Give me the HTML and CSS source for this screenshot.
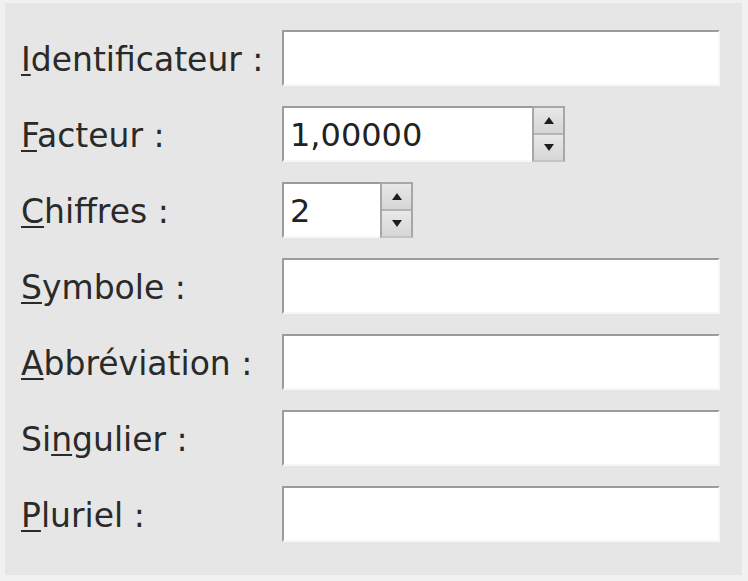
FILE: index.html
```html
<!DOCTYPE html>
<html lang="fr">
<head>
<meta charset="utf-8">
<title>Unité</title>
<link rel="stylesheet" href="styles.css">
</head>
<body>
<div class="panel">
  <form class="form">
    <label class="label" for="ident"><span class="mn">I</span>dentificateur :</label>
    <input class="entry" id="ident" type="text" value="">

    <label class="label" for="facteur"><span class="mn">F</span>acteur :</label>
    <div class="spin spin-wide">
      <input class="spin-field" id="facteur" type="text" value="1,00000">
      <div class="spin-buttons">
        <span class="spin-btn"><span class="arrow-up"></span></span>
        <span class="spin-btn"><span class="arrow-down"></span></span>
      </div>
    </div>

    <label class="label" for="chiffres"><span class="mn">C</span>hiffres :</label>
    <div class="spin spin-narrow">
      <input class="spin-field" id="chiffres" type="text" value="2">
      <div class="spin-buttons">
        <span class="spin-btn"><span class="arrow-up"></span></span>
        <span class="spin-btn"><span class="arrow-down"></span></span>
      </div>
    </div>

    <label class="label" for="symbole"><span class="mn">S</span>ymbole :</label>
    <input class="entry" id="symbole" type="text" value="">

    <label class="label" for="abbr"><span class="mn">A</span>bbréviation :</label>
    <input class="entry" id="abbr" type="text" value="">

    <label class="label" for="sing">Si<span class="mn">n</span>gulier :</label>
    <input class="entry" id="sing" type="text" value="">

    <label class="label" for="plur"><span class="mn">P</span>luriel :</label>
    <input class="entry" id="plur" type="text" value="">
  </form>
</div>
</body>
</html>
```
FILE: styles.css
```css
html, body {
  margin: 0;
  padding: 0;
}

body {
  background: #f1f1f1;
  width: 748px;
  height: 581px;
  overflow: hidden;
  font-family: "DejaVu Sans", "Noto Sans", sans-serif;
  color: #2a2a2a;
}

.panel {
  margin: 3px 6px 0 5px;
  height: 572px;
  box-sizing: border-box;
  background: #e6e6e6;
  padding: 27px 22px 0 16px;
}

.form {
  display: grid;
  grid-template-columns: 261px 1fr;
  grid-auto-rows: 56px;
  row-gap: 20px;
  align-items: center;
}

.label {
  font-size: 33px;
  line-height: 1;
  white-space: nowrap;
  padding-top: 2px;
}

.mn {
  text-decoration: underline;
  text-decoration-thickness: 2px;
  text-underline-offset: 3px;
}

.entry,
.spin-field {
  font-family: "DejaVu Sans", "Noto Sans", sans-serif;
  font-size: 32px;
  color: #222;
  background: #ffffff;
  box-sizing: border-box;
  height: 56px;
  margin: 0;
  padding: 2px 6px 0;
  border-style: solid;
  border-width: 2px;
  border-color: #9b9b9b #f7f7f7 #f7f7f7 #9b9b9b;
  outline: none;
}

.entry {
  width: 100%;
}

.spin {
  display: flex;
  height: 56px;
}

.spin-wide {
  width: 283px;
}

.spin-narrow {
  width: 131px;
}

.spin-field {
  flex: 1;
  min-width: 0;
  border-right: none;
}

.spin-buttons {
  width: 33px;
  display: flex;
  flex-direction: column;
  box-sizing: border-box;
  border: 2px solid #a7a7a7;
  border-bottom-color: #c4c4c4;
  background: #dcdcdc;
}

.spin-btn {
  flex: 1;
  display: flex;
  align-items: center;
  justify-content: center;
  background: linear-gradient(#e8e8e8, #d6d6d6);
}

.spin-btn + .spin-btn {
  border-top: 2px solid #b4b4b4;
}

.arrow-up {
  width: 0;
  height: 0;
  border-left: 5px solid transparent;
  border-right: 5px solid transparent;
  border-bottom: 7px solid #1e1e1e;
}

.arrow-down {
  width: 0;
  height: 0;
  border-left: 5px solid transparent;
  border-right: 5px solid transparent;
  border-top: 7px solid #1e1e1e;
}
```
